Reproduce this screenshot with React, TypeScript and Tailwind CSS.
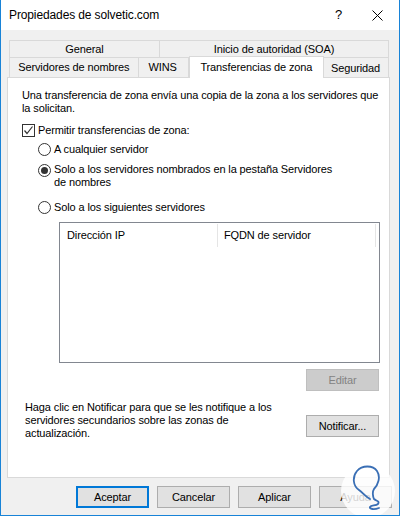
import React from "react";

const font = { fontFamily: '"Liberation Sans", Arial, sans-serif' };

function Radio({ checked }: { checked?: boolean }) {
  return (
    <span className="flex h-[13px] w-[13px] shrink-0 items-center justify-center rounded-full border border-[#333] bg-white">
      {checked && <span className="h-[7px] w-[7px] rounded-full bg-[#333]" />}
    </span>
  );
}

function Button({ label, variant }: { label: string; variant?: "default" | "disabled" }) {
  const base = "flex h-[22px] w-[73px] shrink-0 items-center justify-center";
  if (variant === "default") {
    return <div className={`${base} border-2 border-[#0078d7] bg-[#e1e1e1] text-black`}>{label}</div>;
  }
  if (variant === "disabled") {
    return <div className={`${base} border border-[#bfbfbf] bg-[#cccccc] text-[#838383]`}>{label}</div>;
  }
  return <div className={`${base} border border-[#adadad] bg-[#e1e1e1] text-black`}>{label}</div>;
}

function Watermark() {
  return (
    <svg className="pointer-events-none absolute right-[3px] bottom-0" width="56" height="56" viewBox="0 0 56 56">
      <circle cx="28" cy="32" r="27" fill="white" fillOpacity="0.82" />
      <path
        d="M30 40 C26 38 23 34 19 31 C13 27 12 18 17 12 C22 6 33 6 37 12 C41 18 38 26 34 30 C32 33 33 38 34 40 C36 42 40 42 38 45 C36 47 31 46 30 48 C29 50 34 51 39 49"
        fill="none"
        stroke="#3a6fb5"
        strokeWidth="1.8"
        strokeLinecap="round"
      />
    </svg>
  );
}

export default function App() {
  return (
    <div
      className="relative flex h-[516px] w-[400px] flex-col overflow-hidden whitespace-nowrap border-x border-b border-[#1883d7] bg-[#f0f0f0] text-[11px] tracking-[-0.12px] text-black"
      style={font}
    >
      {/* title bar */}
      <div className="flex h-[30px] shrink-0 items-center bg-white pl-[8px]">
        <span className="text-[12px]">Propiedades de solvetic.com</span>
        <span className="ml-auto mr-[30px] text-[13px]">?</span>
        <svg className="mr-[16px]" width="11" height="11" viewBox="0 0 11 11">
          <path d="M0.5 0.5 L10.5 10.5 M10.5 0.5 L0.5 10.5" stroke="#000" strokeWidth="1" />
        </svg>
      </div>

      <div className="flex flex-col px-[6px] pt-[10px]">
        {/* tabs */}
        <div className="ml-[2px] flex w-[380px] flex-col">
          <div className="flex h-[18px]">
            <div className="flex w-[151px] items-center justify-center border border-[#d9d9d9]">General</div>
            <div className="-ml-px flex w-[230px] items-center justify-center border border-[#d9d9d9]">
              Inicio de autoridad (SOA)
            </div>
          </div>
          <div className="flex h-[19px] items-end">
            <div className="flex h-[19px] w-[130px] items-center justify-center border-x border-[#d9d9d9]">
              Servidores de nombres
            </div>
            <div className="-ml-px flex h-[19px] w-[51px] items-center justify-center border-r border-[#d9d9d9]">WINS</div>
            <div className="relative z-10 -mb-px flex h-[22px] w-[136px] items-center justify-center border-x border-t border-[#d9d9d9] bg-white">
              Transferencias de zona
            </div>
            <div className="-ml-px flex h-[19px] w-[66px] items-center justify-center border-r border-[#d9d9d9] pt-[2px]">
              Seguridad
            </div>
          </div>
        </div>

        {/* panel */}
        <div className="flex h-[401px] w-[383px] flex-col border border-[#d9d9d9] bg-white pl-[14px] pt-[11px]">
          <p className="leading-[13px]">
            Una transferencia de zona envía una copia de la zona a los servidores que
            <br />
            la solicitan.
          </p>

          <label className="mt-[9px] flex h-[13px] items-center gap-[3px]">
            <span className="flex h-[13px] w-[13px] items-center justify-center border border-[#333] bg-white">
              <svg width="11" height="11" viewBox="0 0 11 11">
                <path d="M1.5 5.5 L4 8.5 L9.5 1.5" fill="none" stroke="#333" strokeWidth="1.2" />
              </svg>
            </span>
            Permitir transferencias de zona:
          </label>

          <div className="ml-[16px] flex flex-col items-start">
            <label className="mt-[6px] flex h-[13px] items-center gap-[3px]">
              <Radio />A cualquier servidor
            </label>
            <div className="mt-[8px] flex gap-[3px]">
              <Radio checked />
              <span className="-mt-px leading-[13px]">
                Solo a los servidores nombrados en la pestaña Servidores
                <br />
                de nombres
              </span>
            </div>
            <label className="mt-[12px] flex h-[13px] items-center gap-[3px]">
              <Radio />
              Solo a los siguientes servidores
            </label>

            {/* list view */}
            <div className="ml-[21px] mt-[8px] flex h-[141px] w-[321px] flex-col border border-[#828790] bg-white">
              <div className="mt-px flex h-[23px] items-center">
                <div className="flex h-full w-[158px] items-center border-r border-[#e5e5e5] pl-[7px]">Dirección IP</div>
                <div className="flex h-full w-[158px] items-center border-r border-[#e5e5e5] pl-[6px]">
                  FQDN de servidor
                </div>
              </div>
            </div>
          </div>

          <div className="mt-[6px] flex justify-end pr-[10px]">
            <Button label="Editar" variant="disabled" />
          </div>

          <div className="mt-[10px] flex items-start justify-between pr-[10px]">
            <p className="ml-[3px] leading-[13px]">
              Haga clic en Notificar para que se les notifique a los
              <br />
              servidores secundarios sobre las zonas de
              <br />
              actualización.
            </p>
            <div className="mt-[14px]">
              <Button label="Notificar..." />
            </div>
          </div>
        </div>

        {/* footer buttons */}
        <div className="mt-[8px] flex justify-end gap-[8px] pr-[1px]">
          <Button label="Aceptar" variant="default" />
          <Button label="Cancelar" />
          <Button label="Aplicar" />
          <Button label="Ayuda" />
        </div>
      </div>

      <Watermark />
    </div>
  );
}
